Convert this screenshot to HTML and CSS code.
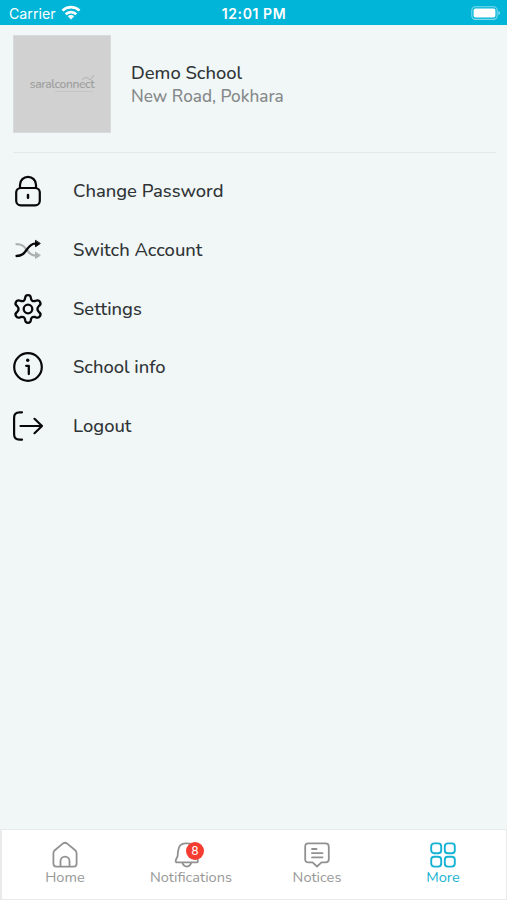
FILE: index.html
```html
<!DOCTYPE html>
<html lang="en">
<head>
  <meta charset="UTF-8" />
  <meta name="viewport" content="width=device-width, initial-scale=1.0" />
  <title>More</title>
  <link rel="stylesheet" href="styles.css">
</head>
<body>
  <header class="status-bar">
    <div class="carrier">
      <span>Carrier</span>
      <svg width="20" height="15" viewBox="0 0 20 15" fill="none" stroke="#fff" stroke-width="2.7">
        <path d="M1.5 5.6a12.2 12.2 0 0 1 17 0" />
        <path d="M4.7 9.2a7.6 7.6 0 0 1 10.6 0" />
        <path d="M10 14.5l-3.2-3.2a4.6 4.6 0 0 1 6.4 0z" fill="#fff" stroke="none" />
      </svg>
    </div>
    <div class="time">12:01 PM</div>
    <svg class="battery" width="30" height="15" viewBox="0 0 30 15">
      <rect x=".8" y=".8" width="25.4" height="12.6" rx="3.6" fill="none" stroke="#7fdaeb" stroke-width="1.1" />
      <rect x="2.6" y="2.6" width="21.8" height="9" rx="1.8" fill="#fff" />
      <path d="M27.4 5v4.2q1.8-.7 1.8-2.1t-1.8-2.1z" fill="#7fdaeb" />
    </svg>
  </header>

  <main>
    <section class="profile">
      <div class="school-logo">
        <span>saralconnect</span>
        <svg class="logo-trend" width="14" height="9" viewBox="0 0 14 9" fill="none" stroke="#b0b0b0" stroke-width="1">
          <path d="M1 6q4-5 8 0l4-5" />
        </svg>
        <i class="logo-line"></i>
      </div>
      <div class="school-text">
        <h1>Demo School</h1>
        <p>New Road, Pokhara</p>
      </div>
    </section>

    <ul class="menu">
      <li>
        <svg width="32" height="32" viewBox="0 0 32 32" fill="none" stroke="#080808" stroke-width="2.2" stroke-linecap="round">
          <rect x="4.2" y="13" width="23.6" height="17.4" rx="4.6" />
          <path d="M8 13V9.8a8 8 0 0 1 16 0V13" />
          <path d="M16 20v2.8" stroke-width="2.5" />
        </svg>
        <span>Change Password</span>
      </li>
      <li>
        <svg width="32" height="32" viewBox="0 0 32 32" fill="none" stroke-width="2.3" stroke-linecap="round">
          <g stroke="#adb0b0">
            <path d="M4.5 10.2c5.500 0 7.500 2 10 5.300 2.800 4 5 6 8.500 6h1" />
            <path d="M23.5 18.5v6l4.500-3z" fill="#adb0b0" stroke-width="1" stroke-linejoin="round" />
          </g>
          <g stroke="#080808">
            <path d="M4.5 22c5.500 0 7.500-2.500 10-6 2.800-4 5-6.300 8.500-6.300h1" />
            <path d="M23.5 6.7v6l4.500-3z" fill="#080808" stroke-width="1" stroke-linejoin="round" />
          </g>
        </svg>
        <span>Switch Account</span>
      </li>
      <li>
        <svg width="32" height="32" viewBox="0 0 32 32" fill="none" stroke="#080808" stroke-width="2.3" stroke-linejoin="round">
          <path d="M13.2 4.600Q13.500 2.200 16 2.200T18.800 4.600Q19.200 8.800 23 8Q26.500 6.300 28 8.800T26.900 13Q24 16 26.900 19Q29.500 20.700 28 23.200T23 24Q19.200 23.200 18.800 27.400Q18.500 29.800 16 29.800T13.200 27.400Q12.800 23.200 9 24Q5.500 25.700 4 23.200T5.100 19Q8 16 5.100 13Q2.500 11.300 4 8.800T9 8Q12.800 8.800 13.200 4.600Z" />
          <circle cx="16" cy="16" r="4.3" />
        </svg>
        <span>Settings</span>
      </li>
      <li>
        <svg width="32" height="32" viewBox="0 0 32 32" fill="none" stroke="#080808" stroke-width="2.2" stroke-linecap="round" stroke-linejoin="round">
          <circle cx="16" cy="16" r="13.8" />
          <circle cx="15.7" cy="9.3" r="1.7" fill="#080808" stroke="none" />
          <path d="M14.2 14.8h2.600v8.200" stroke-width="2.3" />
        </svg>
        <span>School info</span>
      </li>
      <li>
        <svg width="32" height="32" viewBox="0 0 32 32" fill="none" stroke="#080808" stroke-width="2.2" stroke-linecap="round" stroke-linejoin="round">
          <path d="M10 2.3H7.500Q2.100 2.300 2.100 7.700v16.600Q2.100 29.700 7.500 29.700H10" />
          <path d="M8.5 16H30M22.500 8.800L30 16l-7.500 7.200" />
        </svg>
        <span>Logout</span>
      </li>
    </ul>
  </main>

  <nav class="tab-bar">
    <a class="tab">
      <svg width="28" height="28" viewBox="0 0 28 28" fill="none" stroke="#919191" stroke-width="1.8" stroke-linejoin="round">
        <path d="M2.4 12.200q0-1.700 1.400-2.900l8-6.700q2.200-1.800 4.400 0l8 6.700q1.400 1.200 1.400 2.900v10.600q0 2.800-2.800 2.800H5.200q-2.800 0-2.800-2.800z" />
        <path d="M9.5 25.300v-5.200a4.500 4.500 0 0 1 9 0v5.200" />
      </svg>
      <span>Home</span>
    </a>
    <a class="tab">
      <div class="bell">
        <svg width="28" height="28" viewBox="0 0 28 28" fill="none" stroke="#919191" stroke-width="1.8" stroke-linecap="round" stroke-linejoin="round">
          <path d="M8.5 2.400h2q7.200 0 8 8l.5 4.800 1.800 4q.6 2.200-1.700 2.200H.5q-2.300 0-1.700-2.200L.6 15.200l.4-4.800q.8-8 7.500-8z" />
          <path d="M5.4 21.800q1.200 3.700 4.400 3.700t4.400-3.700" />
        </svg>
        <b class="badge">8</b>
      </div>
      <span>Notifications</span>
    </a>
    <a class="tab">
      <svg width="28" height="28" viewBox="0 0 28 28" fill="none" stroke="#919191" stroke-width="1.8" stroke-linecap="round" stroke-linejoin="round">
        <path d="M5.5 2.400h17q3.300 0 3.300 3.300v12.500q0 3.200-3.300 3.200h-4L14 25.500l-4.500-4.100h-4q-3.300 0-3.300-3.200V5.700q0-3.300 3.300-3.300z" />
        <path d="M9 8h4.500M9 12.200h10.500M9 16.400h10.500" />
      </svg>
      <span>Notices</span>
    </a>
    <a class="tab active">
      <svg width="28" height="28" viewBox="0 0 28 28" fill="none" stroke="#16b2d3" stroke-width="1.9">
        <rect x="2.2" y="2.4" width="10" height="9.8" rx="3" />
        <rect x="15.8" y="2.4" width="10" height="9.8" rx="3" />
        <rect x="2.2" y="15.8" width="10" height="9.8" rx="3" />
        <rect x="15.8" y="15.8" width="10" height="9.8" rx="3" />
      </svg>
      <span>More</span>
    </a>
  </nav>
</body>
</html>
```
FILE: styles.css
```css
* {
  box-sizing: border-box;
}

body {
  margin: 0;
  height: 900px;
  display: flex;
  flex-direction: column;
  background-color: #f1f7f7;
  color: #303436;
  font-family: Nunito, Lato, sans-serif;
}

svg {
  display: block;
  flex-shrink: 0;
}

/* Status bar */
.status-bar {
  height: 25px;
  display: grid;
  grid-template-columns: 1fr auto 1fr;
  align-items: center;
  padding: 2px 6px 0 9px;
  background-color: #00b5d8;
  color: #fff;
  font-family: Inter, sans-serif;
  font-size: 14.2px;
}

.carrier {
  display: flex;
  align-items: center;
  gap: 5px;
}

.carrier svg {
  margin-top: -3px;
}

.time {
  font-weight: 600;
  font-size: 14px;
  letter-spacing: 0.6px;
  margin-right: 2px;
}

.battery {
  justify-self: end;
}

/* School profile */
main {
  flex: 1;
  padding: 10px 11px 0 13px;
}

.profile {
  display: flex;
  height: 118px;
  gap: 20px;
  border-bottom: 1px solid #e3e8e9;
}

.school-logo {
  position: relative;
  width: 98px;
  height: 98px;
  display: flex;
  align-items: center;
  justify-content: center;
  background-color: #d1d1d1;
  border: 1px solid #d9dadb;
  color: #a0a0a0;
  font-size: 12px;
  font-weight: 600;
  letter-spacing: -0.4px;
}

.logo-trend {
  position: absolute;
  right: 15px;
  top: 38px;
}

.logo-line {
  position: absolute;
  right: 17px;
  top: 55px;
  width: 38px;
  border-top: 1px solid #c5c5c5;
}

.school-text {
  padding-top: 26px;
}

.school-text h1,
.school-text p {
  margin: 0;
  font-size: 18.4px;
  line-height: 24px;
  font-weight: 500;
}

.school-text p {
  color: #858889;
  font-size: 17.2px;
}

/* Menu */
.menu {
  margin: 0;
  padding: 9px 0 0;
  list-style: none;
}

.menu li {
  display: flex;
  align-items: center;
  height: 58.7px;
  gap: 29px;
  margin-left: -1px;
  font-size: 18.4px;
  font-weight: 500;
}

.menu span {
  padding-bottom: 1px;
}

/* Bottom tabs */
.tab-bar {
  height: 71px;
  display: grid;
  grid-template-columns: repeat(4, 1fr);
  padding-top: 11px;
  background-color: #fff;
  border: 2px solid #e8eaeb;
  border-width: 1px 1px 1px 2px;
}

.tab {
  display: flex;
  flex-direction: column;
  align-items: center;
  color: #979797;
  font-size: 14.6px;
}

.tab span {
  line-height: 18px;
  margin-top: -1px;
}

.active {
  color: #16b2d3;
}

.bell {
  position: relative;
}

.bell svg {
  overflow: visible;
}

.badge {
  position: absolute;
  left: 9px;
  top: 1px;
  width: 18px;
  height: 18px;
  border-radius: 50%;
  background-color: #f43c30;
  color: #fff;
  font: 12px/18px Inter, sans-serif;
  text-align: center;
}
```
